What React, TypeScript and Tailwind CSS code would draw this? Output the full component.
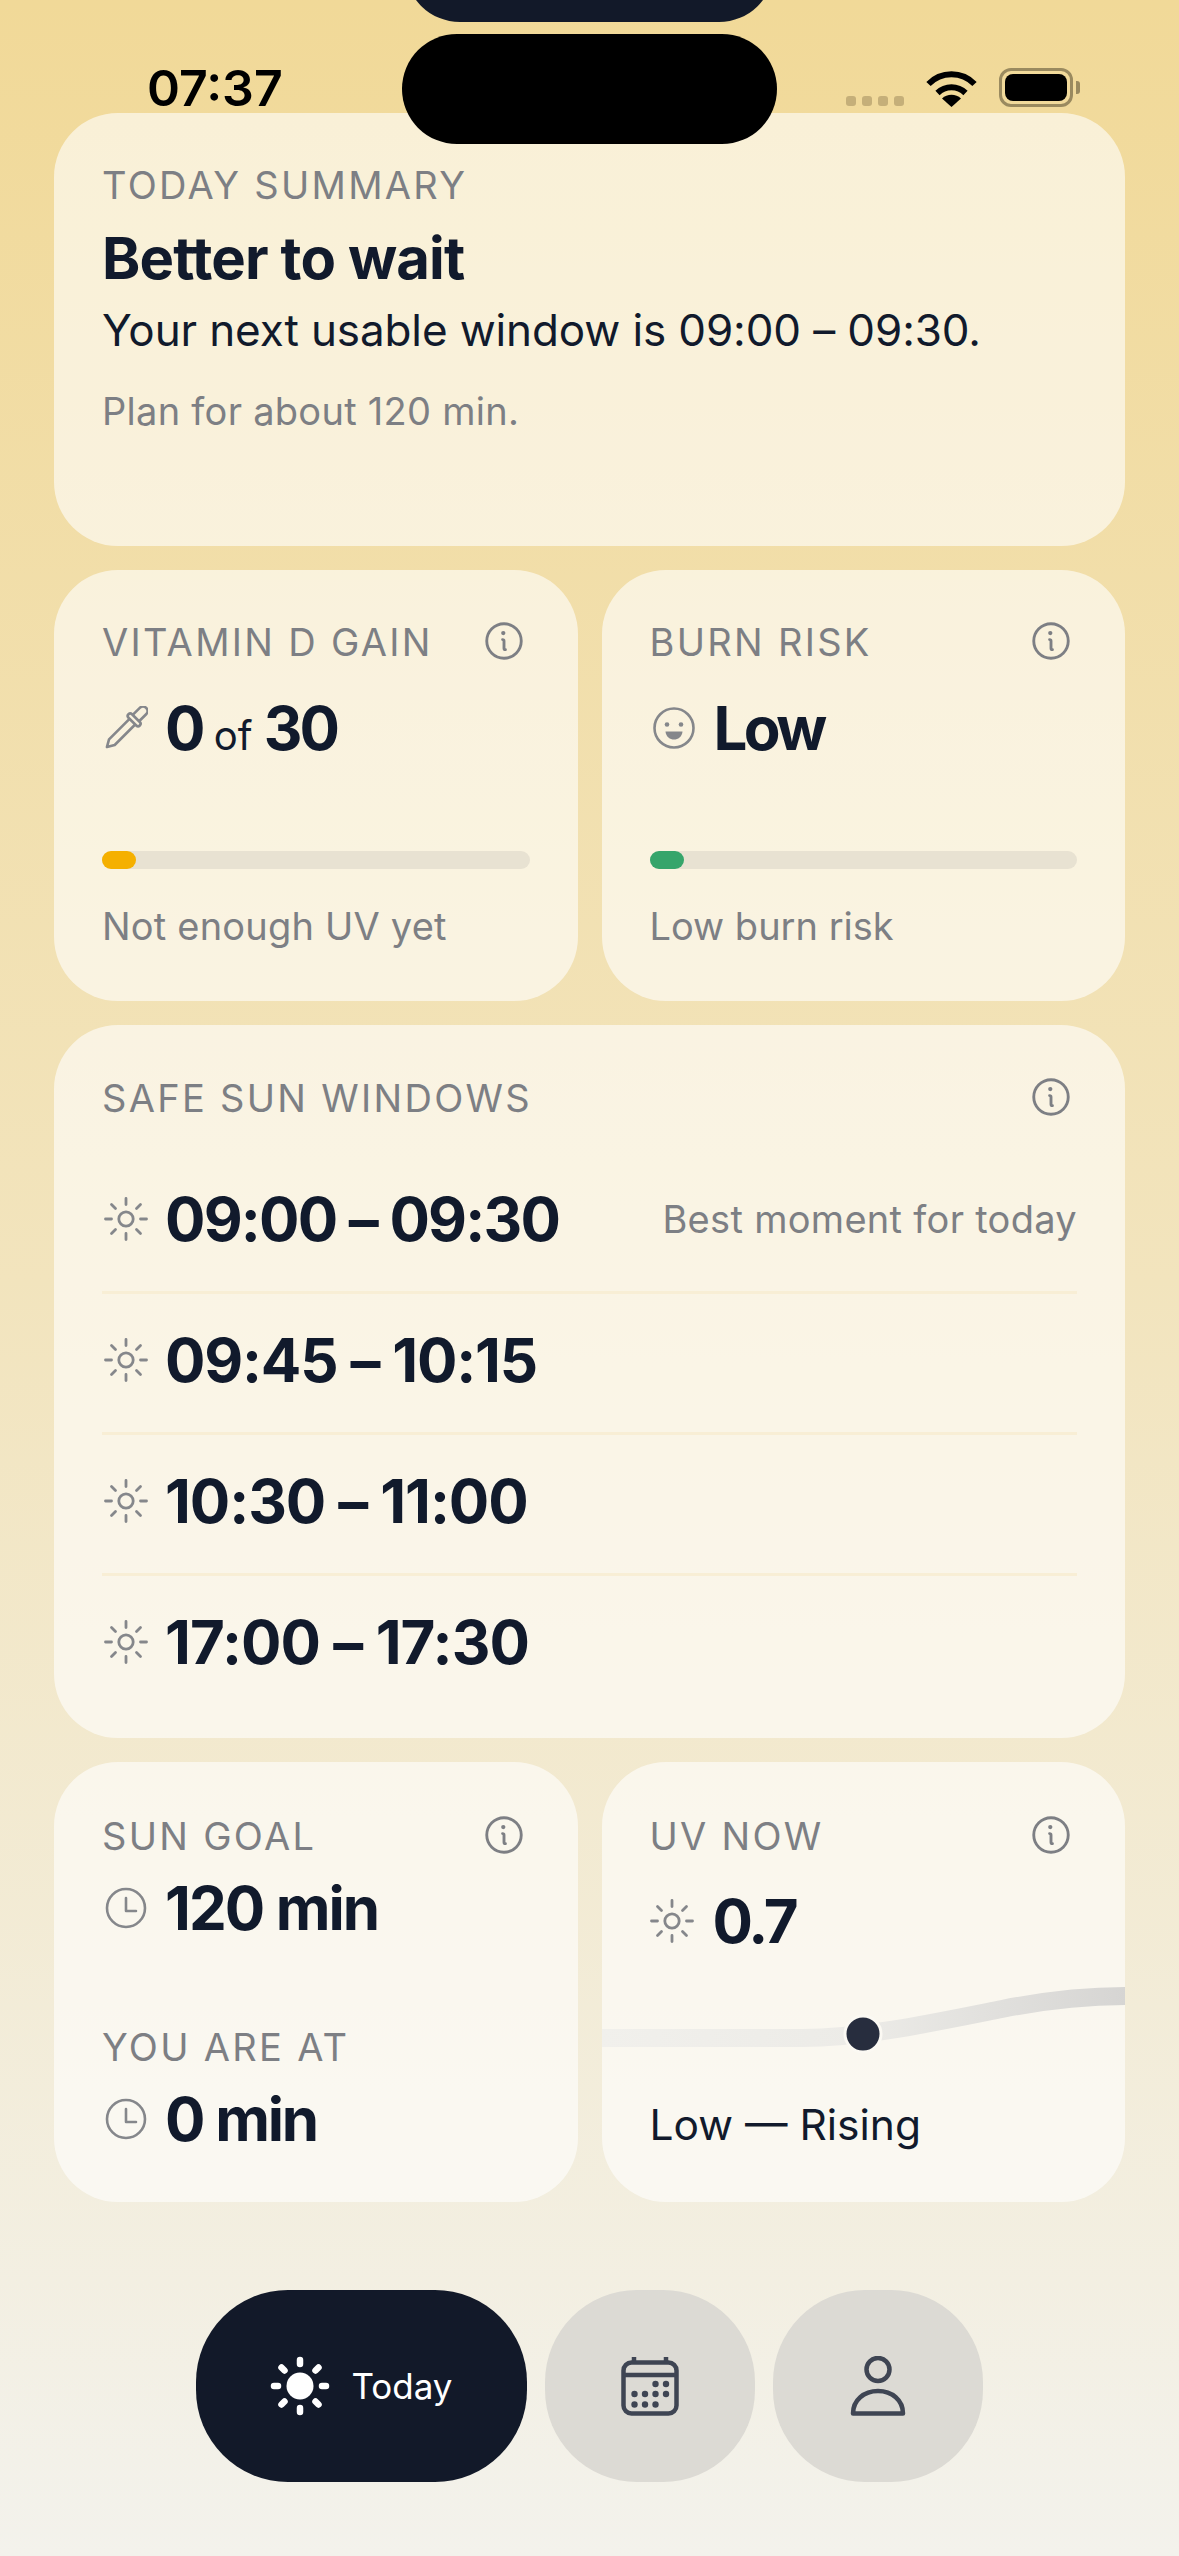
import React from "react";
import { PiInfo } from "react-icons/pi";

const Label = ({ children }: { children: React.ReactNode }) => (
  <div className="text-[38px] leading-[44px] tracking-[2.3px] text-[#7d7f84] uppercase">{children}</div>
);

const Info = () => <PiInfo className="text-[#7d7f84] shrink-0 -mt-[2px] mr-[3px]" size={46} />;

const Sun = () => (
  <svg width="44" height="44" viewBox="-22 -22 44 44" className="shrink-0 text-[#85878b]" fill="none" stroke="currentColor" strokeWidth="2.8" strokeLinecap="round">
    <circle r="7.2" />
    <path d="M0-20.5V-14.5M0 14.5V20.5M-20.5 0H-14.5M14.5 0H20.5M-14.5-14.5L-10.5-10.5M14.5-14.5L10.5-10.5M-14.5 14.5L-10.5 10.5M14.5 14.5L10.5 10.5" />
  </svg>
);

const Clock = () => (
  <svg width="42" height="42" viewBox="-21 -21 42 42" className="shrink-0 text-[#85878b]" fill="none" stroke="currentColor" strokeWidth="2.6" strokeLinecap="round" strokeLinejoin="round">
    <circle r="19" />
    <path d="M0-10V3H10" />
  </svg>
);

const Dropper = () => (
  <svg width="44" height="44" viewBox="-22 -22 44 44" className="shrink-0 text-[#85878b]" fill="none" stroke="currentColor" strokeWidth="2.6" strokeLinejoin="round">
    <g transform="rotate(45)">
      <path d="M-4.5-14V-24A4.5 4.5 0 0 1 4.5-24V-14" />
      <rect x="-8" y="-14" width="16" height="5" rx="2.5" />
      <path d="M-4-9V20L0 27L4 20V-9" />
    </g>
  </svg>
);

const Smile = () => (
  <svg width="44" height="44" viewBox="-22 -22 44 44" className="shrink-0 text-[#85878b]" fill="none">
    <circle r="19.5" stroke="currentColor" strokeWidth="2.6" />
    <circle cx="-7" cy="-3.5" r="2.3" fill="currentColor" />
    <circle cx="7" cy="-3.5" r="2.3" fill="currentColor" />
    <path d="M-8.5 3.5H8.5C8 9 4 11.5 0 11.5S-8 9-8.5 3.5Z" fill="currentColor" />
  </svg>
);

const Bar = ({ colorClass }: { colorClass: string }) => (
  <div className="mt-[87px] h-[18px] w-full rounded-full bg-[#e8e2d2]">
    <div className={`h-[18px] w-[34px] rounded-full ${colorClass}`} />
  </div>
);

const Row = ({ time, note, last, track }: { time: string; note?: string; last?: boolean; track: string }) => (
  <div className={`h-[141px] flex items-center justify-between ${last ? "pb-[9px]" : "pb-[6px] border-b-[3px] border-[#f8eed5]"}`}>
    <div className="flex items-center gap-[17px] pl-[2px]">
      <Sun />
      <span className={`text-[60px] leading-[72px] font-bold text-[#111a2c] ${track}`}>{time}</span>
    </div>
    {note && <span className="text-[38px] leading-[48px] tracking-[0.3px] text-[#7d7f84]">{note}</span>}
  </div>
);

const cardClass = "rounded-[64px] bg-white/60";

export default function App() {
  return (
    <div className="relative h-[2556px] w-[1179px] overflow-hidden bg-gradient-to-b from-[#f1d998] via-[#f2e4bd] to-[#f3f2ec] font-['Inter',sans-serif] text-[#111a2c]">
      <div className="px-[54px] pt-[113px] flex flex-col gap-[24px]">
        <section className={`${cardClass} h-[433px] px-[48px] pt-[50px]`}>
          <Label>Today Summary</Label>
          <div className="mt-[15px] text-[58px] leading-[72px] font-bold tracking-[-0.015em]">Better to wait</div>
          <div className="mt-[8px] text-[44px] leading-[56px] tracking-[-0.12px]">Your next usable window is 09:00 – 09:30.</div>
          <div className="mt-[29px] text-[38px] leading-[48px] tracking-[0.28px] text-[#7d7f84]">Plan for about 120 min.</div>
        </section>

        <div className="grid grid-cols-2 gap-[24px]">
          <section className={`${cardClass} h-[431px] px-[48px] pt-[50px]`}>
            <div className="flex items-center justify-between"><Label>Vitamin D Gain</Label><Info /></div>
            <div className="mt-[28px] h-[72px] flex items-center gap-[17px] pl-[2px]">
              <Dropper />
              <div className="text-[60px] leading-[72px] font-bold tracking-[-0.05em]">0 <span className="text-[40px] leading-none font-normal tracking-normal">of</span> 30</div>
            </div>
            <Bar colorClass="bg-[#f5b000]" />
            <div className="mt-[33px] text-[38px] leading-[48px] tracking-[0.2px] text-[#7d7f84]">Not enough UV yet</div>
          </section>
          <section className={`${cardClass} h-[431px] px-[48px] pt-[50px]`}>
            <div className="flex items-center justify-between"><Label>Burn Risk</Label><Info /></div>
            <div className="mt-[28px] h-[72px] flex items-center gap-[18px] pl-[2px]">
              <Smile />
              <div className="text-[60px] leading-[72px] font-bold tracking-[-0.06em]">Low</div>
            </div>
            <Bar colorClass="bg-[#36a56b]" />
            <div className="mt-[33px] text-[38px] leading-[48px] text-[#7d7f84]">Low burn risk</div>
          </section>
        </div>

        <section className={`${cardClass} h-[713px] px-[48px] pt-[51px]`}>
          <div className="flex items-center justify-between"><Label>Safe Sun Windows</Label><Info /></div>
          <div className="mt-[33px] flex flex-col">
            <Row time="09:00 – 09:30" note="Best moment for today" track="tracking-[-0.03em]" />
            <Row time="09:45 – 10:15" track="tracking-[-0.02em]" />
            <Row time="10:30 – 11:00" track="tracking-[-0.018em]" />
            <Row time="17:00 – 17:30" last track="tracking-[-0.0155em]" />
          </div>
        </section>

        <div className="grid grid-cols-2 gap-[24px]">
          <section className={`${cardClass} h-[440px] px-[48px] pt-[52px]`}>
            <div className="flex items-center justify-between"><Label>Sun Goal</Label><Info /></div>
            <div className="mt-[14px] flex items-center gap-[18px] pl-[3px]">
              <Clock />
              <div className="text-[60px] leading-[72px] font-bold tracking-[-0.032em]">120 min</div>
            </div>
            <div className="mt-[81px]"><Label>You are at</Label></div>
            <div className="mt-[14px] flex items-center gap-[18px] pl-[3px]">
              <Clock />
              <div className="text-[60px] leading-[72px] font-bold tracking-[-0.037em]">0 min</div>
            </div>
          </section>
          <section className={`${cardClass} h-[440px] overflow-hidden pt-[52px]`}>
            <div className="px-[48px] flex items-center justify-between"><Label>UV Now</Label><Info /></div>
            <div className="px-[48px] mt-[27px] flex items-center gap-[19px]">
              <Sun />
              <div className="text-[60px] leading-[72px] font-bold tracking-[-0.05em]">0.7</div>
            </div>
            <svg width="524" height="80" viewBox="0 0 524 80" className="mt-[19px] block" fill="none">
              <defs>
                <linearGradient id="uvLine" x1="0" x2="524" y1="0" y2="0" gradientUnits="userSpaceOnUse">
                  <stop offset="0" stopColor="#f1f0ec" />
                  <stop offset="0.5" stopColor="#ecebe7" />
                  <stop offset="1" stopColor="#d6d5d3" />
                </linearGradient>
              </defs>
              <path d="M0 62L200 62C260 62 330 47 400 33C440 25 480 20 524 20" stroke="url(#uvLine)" strokeWidth="18" />
              <circle cx="261" cy="58" r="18" fill="#272d3e" stroke="#fbf9f3" strokeWidth="3" />
            </svg>
            <div className="px-[48px] mt-[41px] text-[42.5px] leading-[56px]">Low — Rising</div>
          </section>
        </div>
      </div>

      <nav className="mt-[88px] flex justify-center gap-[18px]">
        <div className="h-[192px] w-[331px] rounded-[92px] bg-[#121929] flex items-center justify-center gap-[20px] text-white pr-[1px]">
          <svg width="62" height="62" viewBox="-31 -31 62 62" fill="white" stroke="white" strokeLinecap="round">
            <circle r="13.5" stroke="none" />
            <path strokeWidth="6.5" d="M0-26V-22M0 22V26M-26 0H-22M22 0H26M-18.5-18.5L-15.5-15.5M18.5-18.5L15.5-15.5M-18.5 18.5L-15.5 15.5M18.5 18.5L15.5 15.5" />
          </svg>
          <span className="text-[35px] leading-[48px]">Today</span>
        </div>
        <div className="h-[192px] w-[210px] rounded-[92px] bg-[#dcdad4] flex items-center justify-center text-[#3f4553]">
          <svg width="58" height="60" viewBox="0 0 58 60" fill="none" stroke="currentColor" strokeWidth="4.5">
            <rect x="2.5" y="6.5" width="53" height="51" rx="8" />
            <path d="M2.5 19H55.5M13 1V7M45 1V7" />
            <g fill="currentColor" stroke="none">
              <circle cx="34.5" cy="28" r="3.2" /><circle cx="45" cy="28" r="3.2" />
              <circle cx="13.5" cy="38" r="3.2" /><circle cx="24" cy="38" r="3.2" /><circle cx="34.5" cy="38" r="3.2" /><circle cx="45" cy="38" r="3.2" />
              <circle cx="13.5" cy="48.5" r="3.2" /><circle cx="24" cy="48.5" r="3.2" /><circle cx="34.5" cy="48.5" r="3.2" />
            </g>
          </svg>
        </div>
        <div className="h-[192px] w-[210px] rounded-[92px] bg-[#dcdad4] flex items-center justify-center text-[#3f4553]">
          <svg width="56" height="60" viewBox="0 0 56 60" fill="none" stroke="currentColor" strokeWidth="4.5" strokeLinejoin="round">
            <circle cx="28" cy="13.5" r="11.5" />
            <path d="M3 57.5C3 44 14 35 28 35S53 44 53 57.5Z" />
          </svg>
        </div>
      </nav>

      <div className="absolute left-[405px] -top-[88px] h-[110px] w-[369px] rounded-[55px] bg-[#121929]" />
      <div className="absolute left-[402px] top-[34px] h-[110px] w-[375px] rounded-[55px] bg-black" />
      <div className="absolute left-[147px] top-[59px] text-[50px] leading-[58px] font-semibold text-black">07:37</div>
      <div className="absolute left-[846px] top-[68px] flex items-end">
        <div className="flex gap-[6px] mb-[1px]">
          <div className="h-[10px] w-[10px] rounded-[3px] bg-[#c5af79]" />
          <div className="h-[10px] w-[10px] rounded-[3px] bg-[#c5af79]" />
          <div className="h-[10px] w-[10px] rounded-[3px] bg-[#c5af79]" />
          <div className="h-[10px] w-[10px] rounded-[3px] bg-[#c5af79]" />
        </div>
        <svg width="51" height="38" viewBox="0 0 51 38" className="ml-[22px]" fill="none" stroke="black" strokeWidth="6">
          <path d="M2.5 15A32 32 0 0 1 48.5 15" />
          <path d="M11.5 24A20 20 0 0 1 39.5 24" />
          <path d="M25.5 38L16 29.5A14 14 0 0 1 35 29.5Z" fill="black" stroke="none" />
        </svg>
        <div className="ml-[22px] h-[39px] w-[74px] rounded-[12px] border-[3px] border-[#9a8a5f] p-[3px]">
          <div className="h-full w-full rounded-[8px] bg-black" />
        </div>
        <div className="ml-[3px] mb-[13px] h-[13px] w-[4px] rounded-r-[3px] bg-[#9a8a5f]" />
      </div>
    </div>
  );
}
